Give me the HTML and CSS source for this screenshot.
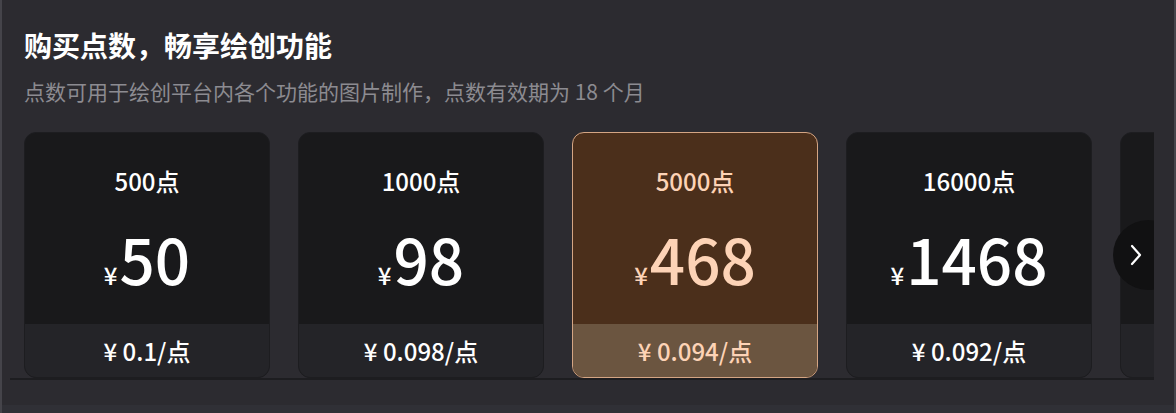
FILE: index.html
```html
<!DOCTYPE html>
<html lang="zh-CN">
<head>
<meta charset="utf-8">
<link rel="stylesheet" href="styles.css">
</head>
<body>
<div class="page">
  <div class="head">
    <h1 class="title">购买点数，畅享绘创功能</h1>
    <p class="sub">点数可用于绘创平台内各个功能的图片制作，点数有效期为 18 个月</p>
  </div>
  <div class="scroller">
    <div class="track">
      <div class="card">
        <div class="card-top">
          <div class="pts">500点</div>
          <div class="price"><span class="yen">¥</span><span class="num">50</span></div>
        </div>
        <div class="unit">¥ 0.1/点</div>
      </div>
      <div class="card">
        <div class="card-top">
          <div class="pts">1000点</div>
          <div class="price"><span class="yen">¥</span><span class="num">98</span></div>
        </div>
        <div class="unit">¥ 0.098/点</div>
      </div>
      <div class="card active">
        <div class="card-top">
          <div class="pts">5000点</div>
          <div class="price"><span class="yen">¥</span><span class="num">468</span></div>
        </div>
        <div class="unit">¥ 0.094/点</div>
      </div>
      <div class="card">
        <div class="card-top">
          <div class="pts">16000点</div>
          <div class="price"><span class="yen">¥</span><span class="num">1468</span></div>
        </div>
        <div class="unit">¥ 0.092/点</div>
      </div>
      <div class="card card-peek">
        <div class="card-top"></div>
        <div class="unit"></div>
      </div>
    </div>
    <button class="next" aria-label="下一页">
      <svg width="14" height="22" viewBox="0 0 14 22"><path d="M3 2 L11 11 L3 20" fill="none" stroke="#ffffff" stroke-width="2.2" stroke-linecap="round" stroke-linejoin="round"/></svg>
    </button>
  </div>
  <div class="foot"></div>
</div>
</body>
</html>
```

FILE: styles.css
```css
html, body {
  margin: 0;
  padding: 0;
  background: #2c2b30;
}
body {
  width: 1176px;
  height: 413px;
  overflow: hidden;
  font-family: "Noto Sans CJK SC", "Noto Sans", sans-serif;
}
.page {
  position: relative;
  height: 413px;
  border-left: 2px solid #45444a;
  border-right: 2px solid #46454b;
  box-sizing: border-box;
}
.head {
  padding: 27px 0 0 22px;
}
.title {
  margin: 0;
  font-size: 28px;
  line-height: 36px;
  font-weight: 700;
  color: #ffffff;
}
.sub {
  margin: 14px 0 0;
  font-size: 21px;
  line-height: 28px;
  color: #8c8b91;
}
.scroller {
  position: relative;
  margin: 27px 0 0 8px;
  width: 1144px;
  height: 248px;
  overflow: hidden;
  border-bottom: 2px solid #1d1d20;
  box-sizing: border-box;
}
.track {
  display: flex;
  gap: 28px;
  padding-left: 14px;
}
.card {
  flex: 0 0 246px;
  height: 246px;
  box-sizing: border-box;
  border-radius: 12px;
  overflow: hidden;
  display: flex;
  flex-direction: column;
  background: #19191b;
  border: 1px solid #1d1d20;
  color: #ffffff;
}
.card-top {
  flex: 1;
  display: flex;
  flex-direction: column;
  align-items: center;
}
.pts {
  margin-top: 33px;
  font-size: 24px;
  line-height: 30px;
  font-weight: 500;
}
.price {
  margin-top: 26px;
  display: flex;
  align-items: baseline;
}
.yen {
  font-size: 24px;
  font-weight: 500;
  margin-right: 2px;
}
.num {
  font-size: 62px;
  line-height: 72px;
  font-weight: 500;
}
.unit {
  height: 53px;
  flex: 0 0 53px;
  background: #242428;
  display: flex;
  align-items: center;
  justify-content: center;
  font-size: 24px;
  font-weight: 500;
}
.card.active {
  background: #4b2f1b;
  border-color: #d4a584;
  color: #fdd3b6;
}
.card.active .unit {
  background: #6b5540;
}
.next {
  position: absolute;
  left: 1103px;
  top: 88px;
  width: 70px;
  height: 70px;
  border-radius: 50%;
  border: none;
  background: #111112;
  padding: 0;
  display: flex;
  align-items: center;
  justify-content: flex-start;
  cursor: pointer;
}
.next svg {
  margin-left: 16px;
}
.foot {
  position: absolute;
  left: 0;
  right: 0;
  bottom: 0;
  height: 8px;
  background: #303036;
}
```
